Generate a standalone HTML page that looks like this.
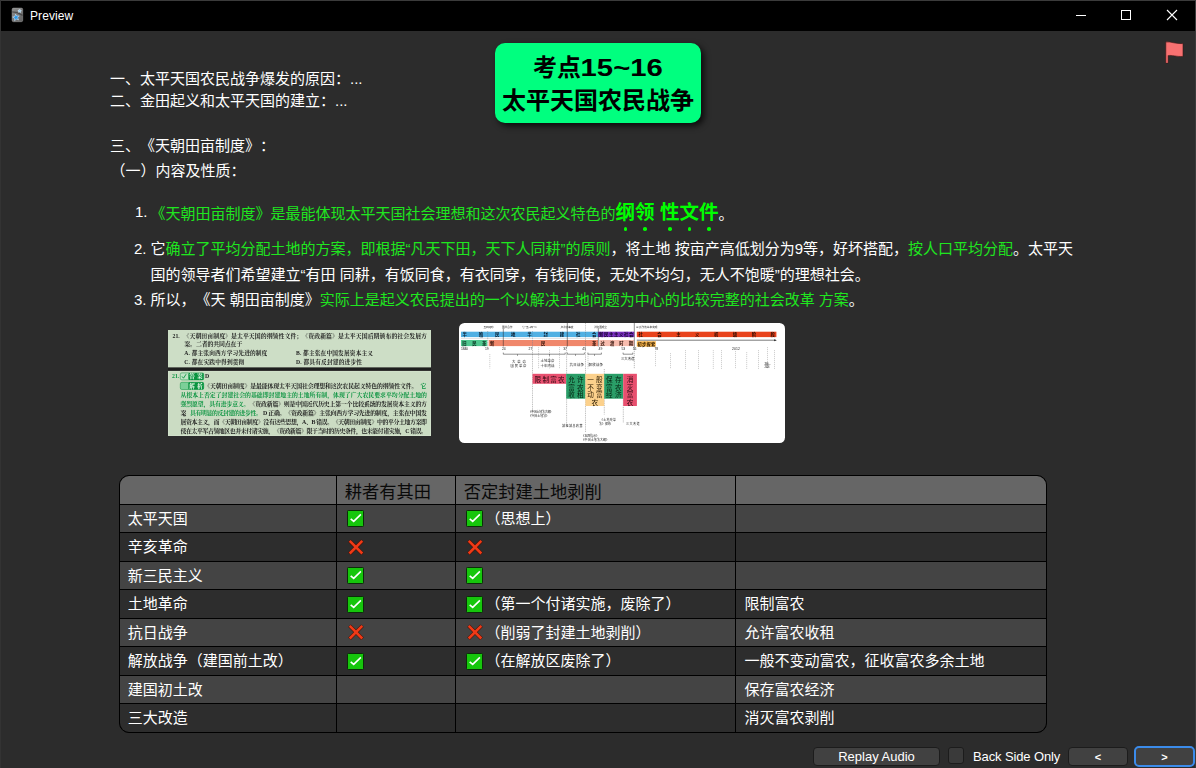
<!DOCTYPE html>
<html lang="zh-CN">
<head>
<meta charset="utf-8">
<title>Preview</title>
<style>
*{box-sizing:border-box;text-spacing-trim:space-all;}
html,body{margin:0;padding:0;}
body{width:1196px;height:768px;overflow:hidden;background:#2c2c2c;position:relative;
  font-family:"Liberation Sans","Noto Sans CJK SC",sans-serif;color:#fff;font-size:15px;}
.abs{position:absolute;}
#edgeT{left:0;top:0;width:1196px;height:1px;background:#3b3b3b;}
#edgeL{left:0;top:0;width:1px;height:768px;background:#333;}
#edgeR{left:1195px;top:0;width:1px;height:768px;background:#3b3b3b;}
#titlebar{left:1px;top:1px;width:1194px;height:30px;background:#000;}
#wtitle{left:30px;top:9px;font-size:12px;line-height:15px;color:#fff;letter-spacing:0.1px;}
.ln{position:absolute;white-space:nowrap;font-size:15px;line-height:22px;color:#fff;}
.g{color:#1fe61f;}
.hl{color:#00ff00;font-weight:bold;font-size:19.5px;}
#tbox{left:495px;top:43px;width:206px;height:80px;background:#00ff7f;border-radius:10px;
  box-shadow:3px 3px 6px rgba(0,0,0,0.75);color:#000;font-weight:bold;font-size:24px;line-height:32.5px;
  text-align:center;padding-top:9px;}
.dg{display:inline-block;transform:scaleX(1.22);margin:0 7.3px;}
.dot{position:absolute;width:3.6px;height:3.6px;border-radius:50%;background:#00ff00;top:227.4px;}
/* table */
#tbl{left:119px;top:475px;width:928px;height:258px;border:1px solid #000;border-radius:10px;overflow:hidden;background:#000;}
.row{position:absolute;left:0;width:926px;}
.c{position:absolute;top:0;height:100%;white-space:nowrap;font-size:15px;color:#fff;}
.ic{position:absolute;display:block;}
.hd .c{color:#0a0a0a;font-size:17.25px;top:1.5px;}
.btn{position:absolute;background:#414141;border:1px solid #1c1c1c;border-radius:4px;color:#fff;font-size:13px;text-align:center;}
</style>
</head>
<body>
<div class="abs" id="titlebar"></div>
<div class="abs" id="edgeT"></div><div class="abs" id="edgeL"></div><div class="abs" id="edgeR"></div>
<div class="abs" id="wtitle">Preview</div>

<div class="abs" id="tbox">考点<span class="dg">15~16</span><br>太平天国农民战争</div>

<div class="ln" style="left:110px;top:68px;">一、太平天国农民战争爆发的原因：...</div>
<div class="ln" style="left:110px;top:90px;">二、金田起义和太平天国的建立：...</div>
<div class="ln" style="left:110px;top:135px;">三、《天朝田亩制度》：</div>
<div class="ln" style="left:110.5px;top:160px;">（一）内容及性质：</div>

<div class="ln" style="left:135px;top:197px;line-height:30px;">1.</div>
<div class="ln" style="left:150.5px;top:197px;line-height:30px;"><span class="g">《天朝田亩制度》是最能体现太平天国社会理想和这次农民起义特色的</span><span class="hl">纲领 性文件</span>。</div>
<div class="dot" style="left:623.5px;"></div><div class="dot" style="left:643px;"></div><div class="dot" style="left:668px;"></div><div class="dot" style="left:687.5px;"></div><div class="dot" style="left:707px;"></div>
<div class="ln" style="left:134px;top:238px;">2.</div>
<div class="ln" style="left:150.5px;top:238px;">它<span class="g">确立了平均分配土地的方案，即根据“凡天下田，天下人同耕”的原则</span>，将土地 按亩产高低划分为9等，好坏搭配，<span class="g">按人口平均分配</span>。太平天</div>
<div class="ln" style="left:150.5px;top:264px;">国的领导者们希望建立“有田 同耕，有饭同食，有衣同穿，有钱同使，无处不均匀，无人不饱暖”的理想社会。</div>
<div class="ln" style="left:134px;top:289px;">3.</div>
<div class="ln" style="left:150.5px;top:289px;">所以，《天 朝田亩制度》<span class="g">实际上是起义农民提出的一个以解决土地问题为中心的比较完整的社会改革 方案</span>。</div>

<div class="abs" id="tbl">
<div class="row hd" style="top:0px;height:28px;line-height:28px;background:#666">
<span class="c" style="left:224.7px">耕者有其田</span>
<span class="c" style="left:343.7px">否定封建土地剥削</span>
</div>
<div class="row" style="top:29px;height:27px;line-height:27px;background:#444">
<span class="c" style="left:7.7px">太平天国</span>
<svg class="ic" style="left:226.6px;top:5.2px" width="17" height="17" viewBox="0 0 17 17"><rect x="0.5" y="0.5" width="16" height="16" rx="0.8" fill="#16c60c" stroke="#0b2f08" stroke-width="1"/><path d="M4.3 9.3 L6.7 11.4 L13.3 5.0" fill="none" stroke="#fff" stroke-width="1.6" stroke-linecap="square"/></svg>
<svg class="ic" style="left:345.6px;top:5.2px" width="17" height="17" viewBox="0 0 17 17"><rect x="0.5" y="0.5" width="16" height="16" rx="0.8" fill="#16c60c" stroke="#0b2f08" stroke-width="1"/><path d="M4.3 9.3 L6.7 11.4 L13.3 5.0" fill="none" stroke="#fff" stroke-width="1.6" stroke-linecap="square"/></svg>
<span class="c" style="left:365.5px">（思想上）</span>
</div>
<div class="row" style="top:57px;height:28px;line-height:28px;background:#2d2d2d">
<span class="c" style="left:7.7px">辛亥革命</span>
<svg class="ic" style="left:226.6px;top:5.7px" width="17" height="17" viewBox="0 0 17 17"><path d="M2.5 1.7 L15.5 14.7 M15.5 1.7 L2.5 14.7" fill="none" stroke="#4a1206" stroke-width="3.7" stroke-linecap="butt"/><path d="M2.7 1.9 L15.3 14.5 M15.3 1.9 L2.7 14.5" fill="none" stroke="#f03a17" stroke-width="2.5" stroke-linecap="butt"/></svg>
<svg class="ic" style="left:345.6px;top:5.7px" width="17" height="17" viewBox="0 0 17 17"><path d="M2.5 1.7 L15.5 14.7 M15.5 1.7 L2.5 14.7" fill="none" stroke="#4a1206" stroke-width="3.7" stroke-linecap="butt"/><path d="M2.7 1.9 L15.3 14.5 M15.3 1.9 L2.7 14.5" fill="none" stroke="#f03a17" stroke-width="2.5" stroke-linecap="butt"/></svg>
</div>
<div class="row" style="top:86px;height:27px;line-height:27px;background:#444">
<span class="c" style="left:7.7px">新三民主义</span>
<svg class="ic" style="left:226.6px;top:5.2px" width="17" height="17" viewBox="0 0 17 17"><rect x="0.5" y="0.5" width="16" height="16" rx="0.8" fill="#16c60c" stroke="#0b2f08" stroke-width="1"/><path d="M4.3 9.3 L6.7 11.4 L13.3 5.0" fill="none" stroke="#fff" stroke-width="1.6" stroke-linecap="square"/></svg>
<svg class="ic" style="left:345.6px;top:5.2px" width="17" height="17" viewBox="0 0 17 17"><rect x="0.5" y="0.5" width="16" height="16" rx="0.8" fill="#16c60c" stroke="#0b2f08" stroke-width="1"/><path d="M4.3 9.3 L6.7 11.4 L13.3 5.0" fill="none" stroke="#fff" stroke-width="1.6" stroke-linecap="square"/></svg>
</div>
<div class="row" style="top:114px;height:28px;line-height:28px;background:#2d2d2d">
<span class="c" style="left:7.7px">土地革命</span>
<svg class="ic" style="left:226.6px;top:5.7px" width="17" height="17" viewBox="0 0 17 17"><rect x="0.5" y="0.5" width="16" height="16" rx="0.8" fill="#16c60c" stroke="#0b2f08" stroke-width="1"/><path d="M4.3 9.3 L6.7 11.4 L13.3 5.0" fill="none" stroke="#fff" stroke-width="1.6" stroke-linecap="square"/></svg>
<svg class="ic" style="left:345.6px;top:5.7px" width="17" height="17" viewBox="0 0 17 17"><rect x="0.5" y="0.5" width="16" height="16" rx="0.8" fill="#16c60c" stroke="#0b2f08" stroke-width="1"/><path d="M4.3 9.3 L6.7 11.4 L13.3 5.0" fill="none" stroke="#fff" stroke-width="1.6" stroke-linecap="square"/></svg>
<span class="c" style="left:365.5px">（第一个付诸实施，废除了）</span>
<span class="c" style="left:624.4px">限制富农</span>
</div>
<div class="row" style="top:143px;height:27px;line-height:27px;background:#444">
<span class="c" style="left:7.7px">抗日战争</span>
<svg class="ic" style="left:226.6px;top:5.2px" width="17" height="17" viewBox="0 0 17 17"><path d="M2.5 1.7 L15.5 14.7 M15.5 1.7 L2.5 14.7" fill="none" stroke="#4a1206" stroke-width="3.7" stroke-linecap="butt"/><path d="M2.7 1.9 L15.3 14.5 M15.3 1.9 L2.7 14.5" fill="none" stroke="#f03a17" stroke-width="2.5" stroke-linecap="butt"/></svg>
<svg class="ic" style="left:345.6px;top:5.2px" width="17" height="17" viewBox="0 0 17 17"><path d="M2.5 1.7 L15.5 14.7 M15.5 1.7 L2.5 14.7" fill="none" stroke="#4a1206" stroke-width="3.7" stroke-linecap="butt"/><path d="M2.7 1.9 L15.3 14.5 M15.3 1.9 L2.7 14.5" fill="none" stroke="#f03a17" stroke-width="2.5" stroke-linecap="butt"/></svg>
<span class="c" style="left:365.5px">（削弱了封建土地剥削）</span>
<span class="c" style="left:624.4px">允许富农收租</span>
</div>
<div class="row" style="top:171px;height:28px;line-height:28px;background:#2d2d2d">
<span class="c" style="left:7.7px">解放战争（建国前土改）</span>
<svg class="ic" style="left:226.6px;top:5.7px" width="17" height="17" viewBox="0 0 17 17"><rect x="0.5" y="0.5" width="16" height="16" rx="0.8" fill="#16c60c" stroke="#0b2f08" stroke-width="1"/><path d="M4.3 9.3 L6.7 11.4 L13.3 5.0" fill="none" stroke="#fff" stroke-width="1.6" stroke-linecap="square"/></svg>
<svg class="ic" style="left:345.6px;top:5.7px" width="17" height="17" viewBox="0 0 17 17"><rect x="0.5" y="0.5" width="16" height="16" rx="0.8" fill="#16c60c" stroke="#0b2f08" stroke-width="1"/><path d="M4.3 9.3 L6.7 11.4 L13.3 5.0" fill="none" stroke="#fff" stroke-width="1.6" stroke-linecap="square"/></svg>
<span class="c" style="left:365.5px">（在解放区废除了）</span>
<span class="c" style="left:624.4px">一般不变动富农，征收富农多余土地</span>
</div>
<div class="row" style="top:200px;height:27px;line-height:27px;background:#444">
<span class="c" style="left:7.7px">建国初土改</span>
<span class="c" style="left:624.4px">保存富农经济</span>
</div>
<div class="row" style="top:228px;height:28px;line-height:28px;background:#2d2d2d">
<span class="c" style="left:7.7px">三大改造</span>
<span class="c" style="left:624.4px">消灭富农剥削</span>
</div>
<div class="abs" style="left:216px;top:0;width:1px;height:256px;background:#000"></div>
<div class="abs" style="left:335px;top:0;width:1px;height:256px;background:#000"></div>
<div class="abs" style="left:615px;top:0;width:1px;height:256px;background:#000"></div>
</div>
<!-- window controls -->
<svg class="abs" style="left:1056px;top:1px" width="139" height="30" viewBox="0 0 139 30">
<path d="M20 14.5 H30" stroke="#fff" stroke-width="1" fill="none"/>
<rect x="65.5" y="9.5" width="9" height="9" stroke="#fff" stroke-width="1" fill="none"/>
<path d="M111 9 L121 19 M121 9 L111 19" stroke="#fff" stroke-width="1.1" fill="none"/>
</svg>
<!-- app icon -->
<svg class="abs" style="left:11px;top:7px" width="13" height="16" viewBox="0 0 13 16">
<defs><linearGradient id="ig" x1="0" y1="0" x2="1" y2="1"><stop offset="0" stop-color="#909090"/><stop offset="1" stop-color="#606060"/></linearGradient></defs>
<rect x="1.1" y="1.1" width="10.6" height="13.6" rx="1.4" fill="url(#ig)" stroke="#a4a4a4" stroke-width="0.5"/>
<path d="M1.2 4.8 L6.5 5.6 L11.6 8.4" stroke="#3e3e3e" stroke-width="1.3" fill="none" opacity="0.75"/>
<path d="M4.49 7.05 L5.80 9.06 L8.19 8.86 L6.68 10.72 L7.62 12.93 L5.38 12.08 L3.57 13.65 L3.69 11.25 L1.63 10.01 L3.95 9.39 Z" fill="#2a97e8" stroke="#d6eafb" stroke-width="0.55"/>
<path d="M8.93 2.13 L9.25 3.37 L10.48 3.74 L9.39 4.42 L9.43 5.71 L8.44 4.89 L7.23 5.32 L7.71 4.13 L6.92 3.11 L8.21 3.19 Z" fill="#86c9f6" stroke="#eef7fe" stroke-width="0.5"/>
</svg>
<!-- flag -->
<svg class="abs" style="left:1164px;top:40px" width="21" height="25" viewBox="0 0 21 25">
<path d="M1.8 2.0 C6 1.2 12 4.2 19 3.6 L19 16.4 C12 16.9 8 14.7 4.1 15.7 L4.1 23 L1.8 23 Z" fill="#f87171" stroke="#3a1414" stroke-width="0.6"/>
<path d="M2.95 15.4 L2.95 22.8" stroke="#d85c5c" stroke-width="1.7"/>
</svg>
<!-- bottom bar -->
<div class="btn" style="left:813px;top:747px;width:127px;height:19px;line-height:17px;">Replay Audio</div>
<div class="abs" style="left:948px;top:747px;width:16px;height:17px;background:#3a3a3a;border:1px solid #1c1c1c;border-radius:3px;"></div>
<div class="abs" style="left:973px;top:749px;font-size:13px;line-height:16px;color:#fff;white-space:nowrap;letter-spacing:-0.12px;">Back Side Only</div>
<div class="btn" style="left:1068px;top:747px;width:60px;height:19px;line-height:19px;font-size:11px;font-weight:bold;">&lt;</div>
<div class="btn" style="left:1134px;top:746px;width:61px;height:21px;line-height:19px;font-size:11px;font-weight:bold;border:2px solid #3b8bea;border-radius:5px;">&gt;</div>

<!--IMG1-->
<svg class="abs" style="left:168px;top:330px;will-change:transform" width="263" height="106" viewBox="0 0 263 106" font-family='"Liberation Serif","Noto Serif CJK SC",serif' font-weight="bold">
<rect x="0" y="0" width="263" height="37.6" fill="#cddec6"/>
<rect x="0" y="37.6" width="263" height="3.3" fill="#1e1e1e"/>
<rect x="0" y="40.9" width="263" height="65.1" fill="#d3e2cc"/>
<rect x="0.8" y="41.7" width="261.4" height="63.49999999999999" fill="#cbdcc3"/>
<text x="4.5" y="7.9" font-size="5.8" font-weight="bold" fill="#1c1c1c">21.</text>
<text x="15.5" y="7.9" font-size="5.9" font-weight="bold" fill="#1c1c1c" textLength="243.5" lengthAdjust="spacing">《天朝田亩制度》是太平天国的纲领性文件；《资政新篇》是太平天国后期颁布的社会发展方</text>
<text x="16.3" y="16.4" font-size="5.9" font-weight="bold" fill="#1c1c1c" textLength="58" lengthAdjust="spacing">案。二者的共同点在于</text>
<text x="16.3" y="25.2" font-size="5.7" font-weight="bold" fill="#1c1c1c" textLength="83" lengthAdjust="spacing">A. 都主张向西方学习先进的制度</text>
<text x="128.0" y="25.2" font-size="5.7" font-weight="bold" fill="#1c1c1c" textLength="77" lengthAdjust="spacing">B. 都主张在中国发展资本主义</text>
<text x="16.3" y="34.2" font-size="5.7" font-weight="bold" fill="#1c1c1c" textLength="60" lengthAdjust="spacing">C. 都在实践中得到贯彻</text>
<text x="128.0" y="34.2" font-size="5.7" font-weight="bold" fill="#1c1c1c" textLength="66" lengthAdjust="spacing">D. 都具有反封建的进步性</text>
<text x="4.0" y="48.0" font-size="5.8" font-weight="bold" fill="#0a9440">21.</text>
<rect x="12.3" y="42.9" width="23.4" height="7" rx="1.6" fill="#bfe3c6" stroke="#0a9440" stroke-width="0.5"/>
<rect x="20.3" y="42.9" width="15.4" height="7" rx="1.2" fill="#0a9440"/>
<path d="M14.0 46.4 l1.5 1.8 l2.6 -4" stroke="#0a9440" stroke-width="0.9" fill="none"/>
<text x="21.3" y="48.3" font-size="5.6" font-weight="bold" fill="#eaf7ea" textLength="13.4" lengthAdjust="spacing">答案</text>
<text x="37.0" y="48.0" font-size="5.8" font-weight="bold" fill="#1c1c1c">D</text>
<rect x="12.3" y="52.3" width="23.4" height="7.2" rx="1.6" fill="#7ccf98" stroke="#0a9440" stroke-width="0.5"/>
<rect x="20.3" y="52.3" width="15.4" height="7.2" rx="1.2" fill="#0a9440"/>
<text x="21.3" y="58.0" font-size="5.6" font-weight="bold" fill="#eaf7ea" textLength="13.4" lengthAdjust="spacing">解析</text>
<text x="36.3" y="58.1" font-size="5.9" font-weight="bold" fill="#1c1c1c" textLength="213" lengthAdjust="spacing">《天朝田亩制度》是最能体现太平天国社会理想和这次农民起义特色的纲领性文件。</text>
<text x="252.5" y="58.1" font-size="5.9" font-weight="bold" fill="#0a9440">它</text>
<text x="12.5" y="66.8" font-size="5.9" font-weight="bold" fill="#0a9440" textLength="246.5" lengthAdjust="spacing">从根本上否定了封建社会的基础即封建地主的土地所有制，体现了广大农民要求平均分配土地的</text>
<text x="12.5" y="75.6" font-size="5.9" font-weight="bold" fill="#0a9440" textLength="69" lengthAdjust="spacing">强烈愿望，具有进步意义。</text>
<text x="81.5" y="75.6" font-size="5.9" font-weight="bold" fill="#1c1c1c" textLength="177.5" lengthAdjust="spacing">《资政新篇》则是中国近代历史上第一个比较系统的发展资本主义的方</text>
<text x="12.5" y="84.9" font-size="5.9" font-weight="bold" fill="#1c1c1c" textLength="9.5" lengthAdjust="spacing">案，</text>
<text x="22.0" y="84.9" font-size="5.9" font-weight="bold" fill="#0a9440" textLength="72" lengthAdjust="spacing">具有明显的反封建的进步性。</text>
<text x="95.0" y="84.9" font-size="5.9" font-weight="bold" fill="#1c1c1c" textLength="164" lengthAdjust="spacing">D 正确。《资政新篇》主张向西方学习先进的制度，主张在中国发</text>
<text x="12.5" y="93.7" font-size="5.9" font-weight="bold" fill="#1c1c1c" textLength="246.5" lengthAdjust="spacing">展资本主义，而《天朝田亩制度》没有这些思想，A、B 错误。《天朝田亩制度》中的平分土地方案即</text>
<text x="12.5" y="102.5" font-size="5.9" font-weight="bold" fill="#1c1c1c" textLength="246.5" lengthAdjust="spacing">使在太平军占领地区也并未付诸实施，《资政新篇》限于当时的历史条件，也未能付诸实施，C 错误。</text>
</svg>
<!--/IMG1-->
<!--IMG2-->
<svg class="abs" style="left:459px;top:323px;will-change:transform" width="326" height="120" viewBox="0 0 326 120" font-family='"Liberation Sans","Noto Sans CJK SC",sans-serif' >
<rect x="0" y="0" width="326" height="120" rx="5.5" fill="#fff"/>
<text x="24.5" y="4.8" font-size="2.7" font-weight="normal" fill="#333" textLength="10.0" lengthAdjust="spacing">五四运动</text>
<text x="43.0" y="4.8" font-size="2.7" font-weight="normal" fill="#333" textLength="10.5" lengthAdjust="spacing">国共合作</text>
<text x="63.0" y="4.8" font-size="2.7" font-weight="normal" fill="#333" textLength="15" lengthAdjust="spacing">七一五—四一二</text>
<text x="101.5" y="4.8" font-size="2.7" font-weight="normal" fill="#333" textLength="13.0" lengthAdjust="spacing">卢沟桥事变</text>
<text x="135.0" y="4.8" font-size="2.7" font-weight="normal" fill="#333" textLength="13" lengthAdjust="spacing">新中国成立</text>
<text x="177.0" y="4.8" font-size="2.7" font-weight="normal" fill="#333" textLength="21.5" lengthAdjust="spacing">三大改造基本完成</text>
<rect x="2.0" y="8.7" width="137.0" height="5.4" fill="#50b0e3"/>
<rect x="139.0" y="8.7" width="36.3" height="5.4" fill="#7a30c0"/>
<rect x="177.8" y="8.7" width="139.6" height="5.4" fill="#e9431c"/>
<text x="3.5" y="13.1" font-size="4.4" font-weight="bold" fill="#0a1a2a" textLength="134" lengthAdjust="spacing">半殖民地半封建社会</text>
<text x="140.0" y="13.1" font-size="4.4" font-weight="bold" fill="#14052a" textLength="34.5" lengthAdjust="spacing">新民主主义社会</text>
<text x="179.5" y="13.1" font-size="4.4" font-weight="bold" fill="#2a0a00" textLength="136.5" lengthAdjust="spacing">社会主义初级阶段</text>
<path d="M2.0 15.5 L139.0 15.5" stroke="#bbb" stroke-width="0.4" fill="none"/>
<path d="M177.8 17.2 L316.5 17.2" stroke="#222" stroke-width="0.6" fill="none"/>
<path d="M317.8 17.2 l-2.6 -1 l0 2 z" fill="#222"/>
<rect x="2.0" y="17.0" width="26.3" height="6.1" fill="#50c88f"/>
<rect x="29.7" y="17.0" width="109.3" height="6.1" fill="#f0876b"/>
<rect x="140.3" y="17.0" width="35.0" height="6.1" fill="#f8bcae"/>
<rect x="177.8" y="18.2" width="19.0" height="5.5" fill="#fab64b"/>
<text x="3.3" y="21.7" font-size="4.3" font-weight="bold" fill="#06281a" textLength="24" lengthAdjust="spacing">旧民革</text>
<text x="31.0" y="21.7" font-size="4.3" font-weight="bold" fill="#2a0d05">新</text>
<text x="82.0" y="21.7" font-size="4.3" font-weight="bold" fill="#2a0d05">民</text>
<text x="133.0" y="21.7" font-size="4.3" font-weight="bold" fill="#2a0d05">革</text>
<text x="141.5" y="21.7" font-size="4.3" font-weight="bold" fill="#2a0d05" textLength="32.5" lengthAdjust="spacing">过渡时期</text>
<text x="178.6" y="22.6" font-size="4.2" font-weight="bold" fill="#2a1800" textLength="17.5" lengthAdjust="spacing">初步探索</text>
<path d="M44.3 5.5 L44.3 23.5" stroke="#222" stroke-width="0.5" fill="none"/>
<path d="M108.3 0.0 L108.3 23.5" stroke="#222" stroke-width="0.5" fill="none"/>
<path d="M139.3 5.0 L139.3 23.5" stroke="#222" stroke-width="0.5" fill="none"/>
<path d="M175.3 0.0 L175.3 24.0" stroke="#222" stroke-width="0.5" fill="none"/>
<path d="M28.7 8.0 L28.7 23.5" stroke="#666" stroke-width="0.4" fill="none" stroke-dasharray="1 0.8"/>
<path d="M73.5 8.0 L73.5 23.5" stroke="#5a7a99" stroke-width="0.4" fill="none" stroke-dasharray="1 0.8"/>
<path d="M126.5 0.0 L126.5 23.5" stroke="#666" stroke-width="0.4" fill="none" stroke-dasharray="1 0.8"/>
<text x="2.0" y="27.4" font-size="3.4" font-weight="normal" fill="#222" textLength="7" lengthAdjust="spacing">1840</text>
<text x="26.0" y="27.4" font-size="3.4" font-weight="normal" fill="#222" textLength="3.6" lengthAdjust="spacing">19</text>
<text x="43.0" y="27.4" font-size="3.4" font-weight="normal" fill="#222" textLength="3.6" lengthAdjust="spacing">24</text>
<text x="69.5" y="27.4" font-size="3.4" font-weight="normal" fill="#222" textLength="3.8" lengthAdjust="spacing">27</text>
<text x="104.3" y="27.4" font-size="3.4" font-weight="normal" fill="#222" textLength="3.6" lengthAdjust="spacing">37</text>
<text x="123.3" y="27.4" font-size="3.4" font-weight="normal" fill="#222" textLength="3.8" lengthAdjust="spacing">45</text>
<text x="139.6" y="27.4" font-size="3.4" font-weight="normal" fill="#222" textLength="3.8" lengthAdjust="spacing">49</text>
<text x="162.5" y="27.4" font-size="3.4" font-weight="normal" fill="#222" textLength="3.6" lengthAdjust="spacing">53</text>
<text x="173.8" y="27.4" font-size="3.4" font-weight="normal" fill="#222" textLength="3.6" lengthAdjust="spacing">56</text>
<text x="195.5" y="27.4" font-size="3.4" font-weight="normal" fill="#222" textLength="3.6" lengthAdjust="spacing">78</text>
<text x="273.0" y="27.4" font-size="3.4" font-weight="normal" fill="#222" textLength="8" lengthAdjust="spacing">2012</text>
<path d="M30.8 31.0 L30.8 45.5" stroke="#8a8a8a" stroke-width="0.4" fill="none" stroke-dasharray="1.2 0.8"/>
<path d="M79.6 24.0 L79.6 45.5" stroke="#8a8a8a" stroke-width="0.4" fill="none" stroke-dasharray="1.2 0.8"/>
<path d="M90.5 27.0 L90.5 45.5" stroke="#8a8a8a" stroke-width="0.4" fill="none" stroke-dasharray="1.2 0.8"/>
<path d="M100.5 24.0 L100.5 45.5" stroke="#8a8a8a" stroke-width="0.4" fill="none" stroke-dasharray="1.2 0.8"/>
<path d="M129.0 31.0 L129.0 45.5" stroke="#8a8a8a" stroke-width="0.4" fill="none" stroke-dasharray="1.2 0.8"/>
<path d="M196.5 28.0 L196.5 43.5" stroke="#8a8a8a" stroke-width="0.4" fill="none" stroke-dasharray="1.2 0.8"/>
<path d="M211.5 30.0 L211.5 46.0" stroke="#8a8a8a" stroke-width="0.4" fill="none" stroke-dasharray="1.2 0.8"/>
<path d="M226.5 27.0 L226.5 46.0" stroke="#8a8a8a" stroke-width="0.4" fill="none" stroke-dasharray="1.2 0.8"/>
<path d="M239.5 27.0 L239.5 46.0" stroke="#8a8a8a" stroke-width="0.4" fill="none" stroke-dasharray="1.2 0.8"/>
<path d="M254.3 27.0 L254.3 46.0" stroke="#8a8a8a" stroke-width="0.4" fill="none" stroke-dasharray="1.2 0.8"/>
<path d="M262.5 27.0 L262.5 46.0" stroke="#8a8a8a" stroke-width="0.4" fill="none" stroke-dasharray="1.2 0.8"/>
<path d="M276.5 28.0 L276.5 46.0" stroke="#8a8a8a" stroke-width="0.4" fill="none" stroke-dasharray="1.2 0.8"/>
<path d="M287.7 29.0 L287.7 46.0" stroke="#8a8a8a" stroke-width="0.4" fill="none" stroke-dasharray="1.2 0.8"/>
<path d="M299.5 27.0 L299.5 46.0" stroke="#8a8a8a" stroke-width="0.4" fill="none" stroke-dasharray="1.2 0.8"/>
<path d="M308.5 24.0 L308.5 46.0" stroke="#8a8a8a" stroke-width="0.4" fill="none" stroke-dasharray="1.2 0.8"/>
<path d="M315.5 27.0 L315.5 46.0" stroke="#8a8a8a" stroke-width="0.4" fill="none" stroke-dasharray="1.2 0.8"/>
<path d="M175.3 24.0 L175.3 45.5" stroke="#555" stroke-width="0.4" fill="none" stroke-dasharray="1.2 0.8"/>
<path d="M73.5 23.5 L73.5 89.0" stroke="#555" stroke-width="0.4" fill="none" stroke-dasharray="1 0.8"/>
<path d="M107.6 23.5 L107.6 101.0" stroke="#555" stroke-width="0.4" fill="none" stroke-dasharray="1 0.8"/>
<path d="M126.5 23.5 L126.5 109.0" stroke="#555" stroke-width="0.4" fill="none" stroke-dasharray="1 0.8"/>
<path d="M145.3 46.0 L145.3 91.5" stroke="#555" stroke-width="0.4" fill="none" stroke-dasharray="1 0.8"/>
<path d="M164.3 75.0 L164.3 99.5" stroke="#555" stroke-width="0.4" fill="none" stroke-dasharray="1 0.8"/>
<path d="M44.3 29.6 V31.2 H106.2 V29.6" stroke="#222" stroke-width="0.5" fill="none"/>
<path d="M108.3 29.6 V31.2 H125.4 V29.6" stroke="#222" stroke-width="0.5" fill="none"/>
<path d="M128.9 29.6 V31.2 H142.4 V29.6" stroke="#222" stroke-width="0.5" fill="none"/>
<path d="M164.1 29.6 V31.2 H173.8 V29.6" stroke="#222" stroke-width="0.5" fill="none"/>
<path d="M58.5 31.2 L58.5 33.0" stroke="#222" stroke-width="0.4" fill="none"/>
<path d="M90.5 31.2 L90.5 33.0" stroke="#222" stroke-width="0.4" fill="none"/>
<path d="M116.5 31.2 L116.5 33.0" stroke="#222" stroke-width="0.4" fill="none"/>
<path d="M135.5 31.2 L135.5 33.0" stroke="#222" stroke-width="0.4" fill="none"/>
<text x="53.0" y="39.6" font-size="3.4" font-weight="normal" fill="#222" textLength="14" lengthAdjust="spacing">大革命</text>
<text x="51.5" y="44.0" font-size="3.4" font-weight="normal" fill="#222" textLength="16" lengthAdjust="spacing">国民革命</text>
<text x="81.5" y="39.0" font-size="3.4" font-weight="normal" fill="#222" textLength="14" lengthAdjust="spacing">土地革命</text>
<text x="81.5" y="43.5" font-size="3.4" font-weight="normal" fill="#222" textLength="14" lengthAdjust="spacing">十年内战</text>
<text x="110.5" y="42.5" font-size="3.4" font-weight="normal" fill="#222" textLength="14.5" lengthAdjust="spacing">抗日战争</text>
<text x="129.5" y="42.5" font-size="3.4" font-weight="normal" fill="#222" textLength="14.5" lengthAdjust="spacing">解放战争</text>
<text x="162.0" y="36.9" font-size="3.4" font-weight="normal" fill="#222" textLength="13.5" lengthAdjust="spacing">三大改造</text>
<text x="305.5" y="42.0" font-size="2.6" font-weight="normal" fill="#333" textLength="6" lengthAdjust="spacing">2000—</text>
<text x="305.5" y="45.0" font-size="2.6" font-weight="normal" fill="#333" textLength="5" lengthAdjust="spacing">2006</text>
<rect x="73.5" y="50.8" width="33.7" height="10.0" fill="#e8506f"/>
<rect x="107.2" y="50.8" width="19.2" height="24.9" fill="#2a9e68"/>
<rect x="126.4" y="50.8" width="18.8" height="32.2" fill="#fcd18c"/>
<rect x="145.2" y="50.8" width="19.0" height="24.9" fill="#2a9e68"/>
<rect x="164.2" y="50.8" width="13.7" height="32.2" fill="#e8506f"/>
<text x="75.6" y="58.8" font-size="6.6" font-weight="normal" fill="#2a0810" textLength="30" lengthAdjust="spacing">限制富农</text>
<text x="109.2" y="58.8" font-size="6.6" font-weight="normal" fill="#04200f" textLength="15.5" lengthAdjust="spacing">允许</text>
<text x="109.2" y="66.5" font-size="6.6" font-weight="normal" fill="#04200f" textLength="15.5" lengthAdjust="spacing">富农</text>
<text x="109.2" y="74.2" font-size="6.6" font-weight="normal" fill="#04200f" textLength="15.5" lengthAdjust="spacing">收租</text>
<text x="128.2" y="58.8" font-size="6.6" font-weight="normal" fill="#2a1a00" textLength="15.5" lengthAdjust="spacing">一般</text>
<text x="128.2" y="66.5" font-size="6.6" font-weight="normal" fill="#2a1a00" textLength="15.5" lengthAdjust="spacing">不变</text>
<text x="128.2" y="74.2" font-size="6.6" font-weight="normal" fill="#2a1a00" textLength="15.5" lengthAdjust="spacing">动富</text>
<text x="132.5" y="81.9" font-size="6.6" font-weight="normal" fill="#2a1a00">农</text>
<text x="147.0" y="58.8" font-size="6.6" font-weight="normal" fill="#04200f" textLength="15.5" lengthAdjust="spacing">保存</text>
<text x="147.0" y="66.5" font-size="6.6" font-weight="normal" fill="#04200f" textLength="15.5" lengthAdjust="spacing">富农</text>
<text x="147.0" y="74.2" font-size="6.6" font-weight="normal" fill="#04200f" textLength="15.5" lengthAdjust="spacing">经济</text>
<text x="167.7" y="58.8" font-size="6.6" font-weight="normal" fill="#2a0810">消</text>
<text x="167.7" y="66.5" font-size="6.6" font-weight="normal" fill="#2a0810">灭</text>
<text x="167.7" y="74.2" font-size="6.6" font-weight="normal" fill="#2a0810">富</text>
<text x="167.7" y="81.9" font-size="6.6" font-weight="normal" fill="#2a0810">农</text>
<text x="69.5" y="90.4" font-size="2.9" font-weight="normal" fill="#222" textLength="24.5" lengthAdjust="spacing">《中国土地法大纲》</text>
<text x="69.5" y="94.3" font-size="2.9" font-weight="normal" fill="#222" textLength="20.5" lengthAdjust="spacing">《兴国土地法》</text>
<text x="103.0" y="104.1" font-size="3.0" font-weight="normal" fill="#222" textLength="20.5" lengthAdjust="spacing">减租减息政策</text>
<text x="122.5" y="113.6" font-size="2.9" font-weight="normal" fill="#222" textLength="17.5" lengthAdjust="spacing">《五四指示》</text>
<text x="122.5" y="117.6" font-size="2.9" font-weight="normal" fill="#222" textLength="27.5" lengthAdjust="spacing">《中国土地法大纲》</text>
<text x="141.0" y="97.7" font-size="2.9" font-weight="normal" fill="#222" textLength="16" lengthAdjust="spacing">《土地改革</text>
<text x="140.0" y="101.6" font-size="2.9" font-weight="normal" fill="#222" textLength="12" lengthAdjust="spacing">法》颁布</text>
<text x="167.0" y="102.3" font-size="3.0" font-weight="normal" fill="#222" textLength="13.5" lengthAdjust="spacing">三大改造</text>
</svg>
<!--/IMG2-->
</body>
</html>
